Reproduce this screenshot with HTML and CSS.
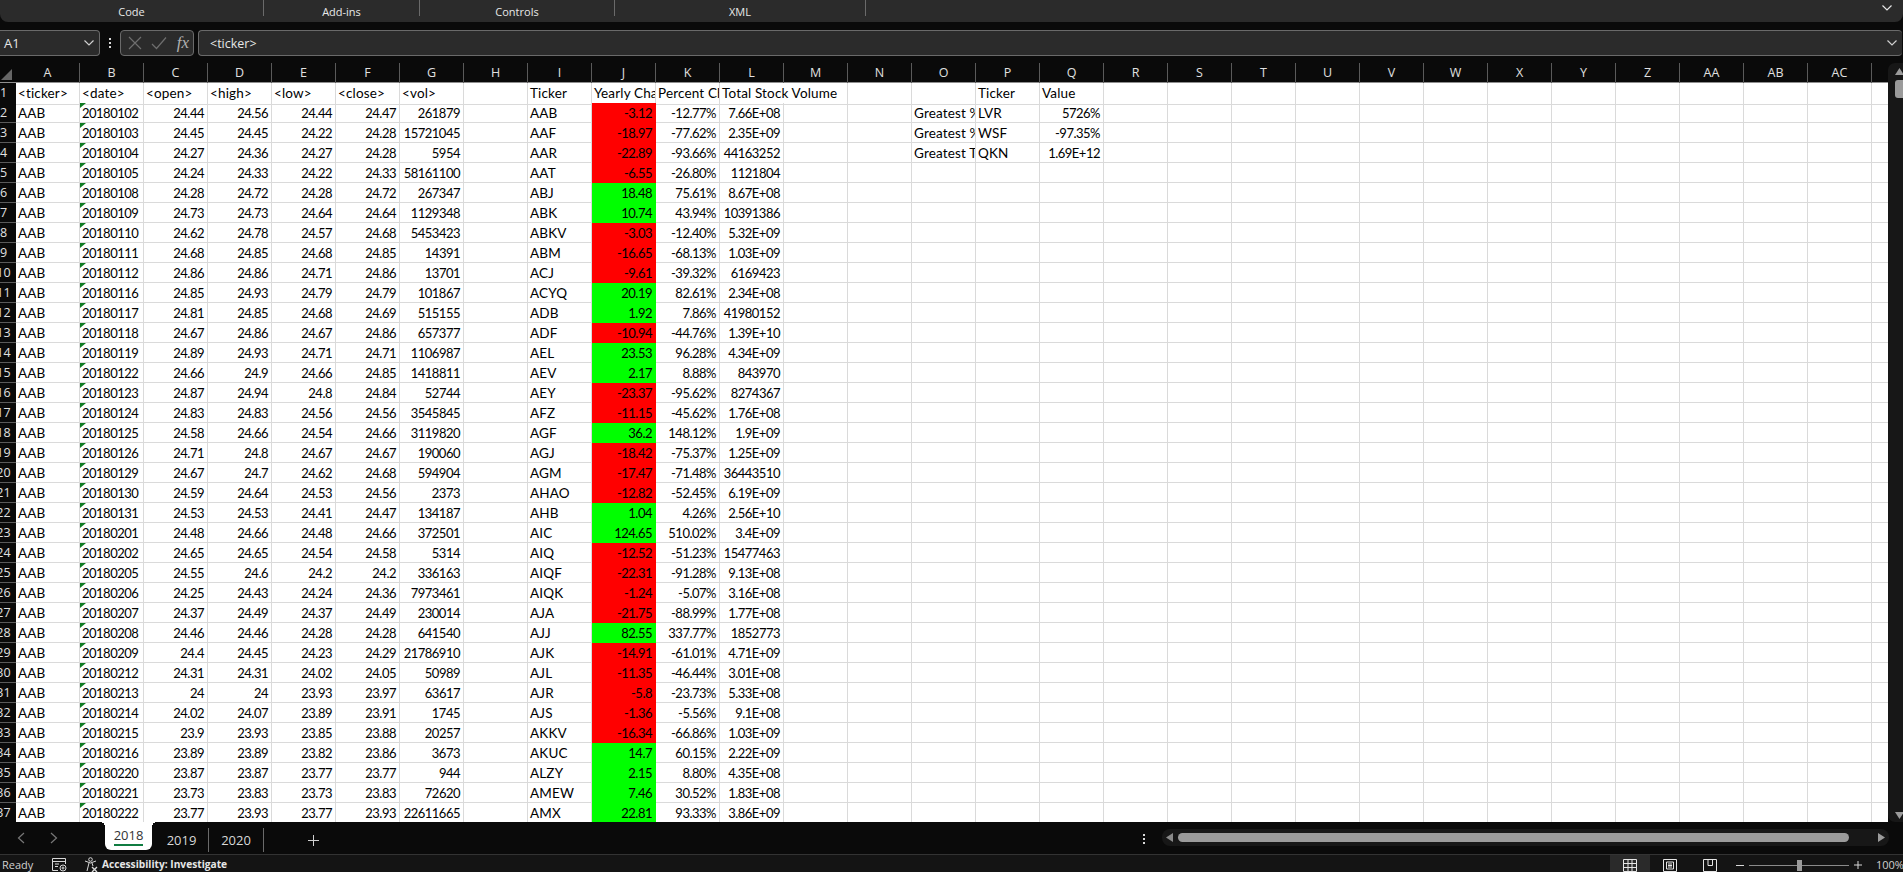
FILE: index.html
```html
<!DOCTYPE html>
<html lang="en">

<head>
    <meta charset="UTF-8">
    <title>Stock data - Excel</title>
    <link rel="stylesheet" href="styles.css">
</head>

<body>

    <!-- ribbon group labels -->
    <div class="ribbon">
        <div class="group g-code">Code</div>
        <div class="group g-addins">Add-ins</div>
        <div class="group g-controls">Controls</div>
        <div class="group g-xml">XML</div>
        <svg class="ribbon-chev" width="10" height="6" viewBox="0 0 10 6"><path d="M0.5 0.5 L5 5 L9.5 0.5" fill="none" stroke="#e6e6e6" stroke-width="1.2"/></svg>
    </div>

    <!-- name box and formula bar -->
    <div class="formula-row">
        <div class="name-box">
            <span>A1</span>
            <svg width="10" height="6" viewBox="0 0 10 6"><path d="M0.5 0.5 L5 5 L9.5 0.5" fill="none" stroke="#d0d0d0" stroke-width="1.2"/></svg>
        </div>
        <div class="dots"><b></b><b></b><b></b></div>
        <div class="fx-box">
            <svg width="14" height="14" viewBox="0 0 14 14"><path d="M1 1 L13 13 M13 1 L1 13" stroke="#6e6e6e" stroke-width="1.2" fill="none"/></svg>
            <svg width="16" height="14" viewBox="0 0 16 14"><path d="M1 8 L5.5 12.5 L15 1.5" stroke="#6e6e6e" stroke-width="1.2" fill="none"/></svg>
            <span class="fx">fx</span>
        </div>
        <div class="formula-input">
            <span>&lt;ticker&gt;</span>
            <svg width="10" height="6" viewBox="0 0 10 6"><path d="M0.5 0.5 L5 5 L9.5 0.5" fill="none" stroke="#d0d0d0" stroke-width="1.2"/></svg>
        </div>
    </div>

    <div class="grid-area">
        <div class="sheet">
            <div class="col-head">
                <div class="corner"><svg width="11" height="11" viewBox="0 0 11 11"><path d="M11 0 V11 H0 Z" fill="#666"/></svg></div>
                <div>A</div><div>B</div><div>C</div><div>D</div><div>E</div><div>F</div><div>G</div><div>H</div><div>I</div><div>J</div><div>K</div><div>L</div><div>M</div><div>N</div><div>O</div><div>P</div><div>Q</div><div>R</div><div>S</div><div>T</div><div>U</div><div>V</div><div>W</div><div>X</div><div>Y</div><div>Z</div><div>AA</div><div>AB</div><div>AC</div><div></div>
            </div>

            <div class="row"><div class="rh">1</div><div class="t">&lt;ticker&gt;</div><div class="t">&lt;date&gt;</div><div class="t">&lt;open&gt;</div><div class="t">&lt;high&gt;</div><div class="t">&lt;low&gt;</div><div class="t">&lt;close&gt;</div><div class="t">&lt;vol&gt;</div><div></div><div class="t">Ticker</div><div class="t">Yearly Change</div><div class="t">Percent Change</div><div class="t spill">Total Stock Volume</div><div></div><div></div><div></div><div class="t">Ticker</div><div class="t">Value</div><div class="rest2"></div></div>
            <div class="row"><div class="rh">2</div><div class="t">AAB</div><div class="d">20180102</div><div>24.44</div><div>24.56</div><div>24.44</div><div>24.47</div><div>261879</div><div></div><div class="t">AAB</div><div class="r">-3.12</div><div>-12.77%</div><div>7.66E+08</div><div></div><div></div><div class="t">Greatest % Increase</div><div class="t">LVR</div><div>5726%</div><div class="rest2"></div></div>
            <div class="row"><div class="rh">3</div><div class="t">AAB</div><div class="d">20180103</div><div>24.45</div><div>24.45</div><div>24.22</div><div>24.28</div><div>15721045</div><div></div><div class="t">AAF</div><div class="r">-18.97</div><div>-77.62%</div><div>2.35E+09</div><div></div><div></div><div class="t">Greatest % Decrease</div><div class="t">WSF</div><div>-97.35%</div><div class="rest2"></div></div>
            <div class="row"><div class="rh">4</div><div class="t">AAB</div><div class="d">20180104</div><div>24.27</div><div>24.36</div><div>24.27</div><div>24.28</div><div>5954</div><div></div><div class="t">AAR</div><div class="r">-22.89</div><div>-93.66%</div><div>44163252</div><div></div><div></div><div class="t">Greatest Total Volume</div><div class="t">QKN</div><div>1.69E+12</div><div class="rest2"></div></div>
            <div class="row"><div class="rh">5</div><div class="t">AAB</div><div class="d">20180105</div><div>24.24</div><div>24.33</div><div>24.22</div><div>24.33</div><div>58161100</div><div></div><div class="t">AAT</div><div class="r">-6.55</div><div>-26.80%</div><div>1121804</div><div class="rest"></div></div>
            <div class="row"><div class="rh">6</div><div class="t">AAB</div><div class="d">20180108</div><div>24.28</div><div>24.72</div><div>24.28</div><div>24.72</div><div>267347</div><div></div><div class="t">ABJ</div><div class="g">18.48</div><div>75.61%</div><div>8.67E+08</div><div class="rest"></div></div>
            <div class="row"><div class="rh">7</div><div class="t">AAB</div><div class="d">20180109</div><div>24.73</div><div>24.73</div><div>24.64</div><div>24.64</div><div>1129348</div><div></div><div class="t">ABK</div><div class="g">10.74</div><div>43.94%</div><div>10391386</div><div class="rest"></div></div>
            <div class="row"><div class="rh">8</div><div class="t">AAB</div><div class="d">20180110</div><div>24.62</div><div>24.78</div><div>24.57</div><div>24.68</div><div>5453423</div><div></div><div class="t">ABKV</div><div class="r">-3.03</div><div>-12.40%</div><div>5.32E+09</div><div class="rest"></div></div>
            <div class="row"><div class="rh">9</div><div class="t">AAB</div><div class="d">20180111</div><div>24.68</div><div>24.85</div><div>24.68</div><div>24.85</div><div>14391</div><div></div><div class="t">ABM</div><div class="r">-16.65</div><div>-68.13%</div><div>1.03E+09</div><div class="rest"></div></div>
            <div class="row"><div class="rh">10</div><div class="t">AAB</div><div class="d">20180112</div><div>24.86</div><div>24.86</div><div>24.71</div><div>24.86</div><div>13701</div><div></div><div class="t">ACJ</div><div class="r">-9.61</div><div>-39.32%</div><div>6169423</div><div class="rest"></div></div>
            <div class="row"><div class="rh">11</div><div class="t">AAB</div><div class="d">20180116</div><div>24.85</div><div>24.93</div><div>24.79</div><div>24.79</div><div>101867</div><div></div><div class="t">ACYQ</div><div class="g">20.19</div><div>82.61%</div><div>2.34E+08</div><div class="rest"></div></div>
            <div class="row"><div class="rh">12</div><div class="t">AAB</div><div class="d">20180117</div><div>24.81</div><div>24.85</div><div>24.68</div><div>24.69</div><div>515155</div><div></div><div class="t">ADB</div><div class="g">1.92</div><div>7.86%</div><div>41980152</div><div class="rest"></div></div>
            <div class="row"><div class="rh">13</div><div class="t">AAB</div><div class="d">20180118</div><div>24.67</div><div>24.86</div><div>24.67</div><div>24.86</div><div>657377</div><div></div><div class="t">ADF</div><div class="r">-10.94</div><div>-44.76%</div><div>1.39E+10</div><div class="rest"></div></div>
            <div class="row"><div class="rh">14</div><div class="t">AAB</div><div class="d">20180119</div><div>24.89</div><div>24.93</div><div>24.71</div><div>24.71</div><div>1106987</div><div></div><div class="t">AEL</div><div class="g">23.53</div><div>96.28%</div><div>4.34E+09</div><div class="rest"></div></div>
            <div class="row"><div class="rh">15</div><div class="t">AAB</div><div class="d">20180122</div><div>24.66</div><div>24.9</div><div>24.66</div><div>24.85</div><div>1418811</div><div></div><div class="t">AEV</div><div class="g">2.17</div><div>8.88%</div><div>843970</div><div class="rest"></div></div>
            <div class="row"><div class="rh">16</div><div class="t">AAB</div><div class="d">20180123</div><div>24.87</div><div>24.94</div><div>24.8</div><div>24.84</div><div>52744</div><div></div><div class="t">AEY</div><div class="r">-23.37</div><div>-95.62%</div><div>8274367</div><div class="rest"></div></div>
            <div class="row"><div class="rh">17</div><div class="t">AAB</div><div class="d">20180124</div><div>24.83</div><div>24.83</div><div>24.56</div><div>24.56</div><div>3545845</div><div></div><div class="t">AFZ</div><div class="r">-11.15</div><div>-45.62%</div><div>1.76E+08</div><div class="rest"></div></div>
            <div class="row"><div class="rh">18</div><div class="t">AAB</div><div class="d">20180125</div><div>24.58</div><div>24.66</div><div>24.54</div><div>24.66</div><div>3119820</div><div></div><div class="t">AGF</div><div class="g">36.2</div><div>148.12%</div><div>1.9E+09</div><div class="rest"></div></div>
            <div class="row"><div class="rh">19</div><div class="t">AAB</div><div class="d">20180126</div><div>24.71</div><div>24.8</div><div>24.67</div><div>24.67</div><div>190060</div><div></div><div class="t">AGJ</div><div class="r">-18.42</div><div>-75.37%</div><div>1.25E+09</div><div class="rest"></div></div>
            <div class="row"><div class="rh">20</div><div class="t">AAB</div><div class="d">20180129</div><div>24.67</div><div>24.7</div><div>24.62</div><div>24.68</div><div>594904</div><div></div><div class="t">AGM</div><div class="r">-17.47</div><div>-71.48%</div><div>36443510</div><div class="rest"></div></div>
            <div class="row"><div class="rh">21</div><div class="t">AAB</div><div class="d">20180130</div><div>24.59</div><div>24.64</div><div>24.53</div><div>24.56</div><div>2373</div><div></div><div class="t">AHAO</div><div class="r">-12.82</div><div>-52.45%</div><div>6.19E+09</div><div class="rest"></div></div>
            <div class="row"><div class="rh">22</div><div class="t">AAB</div><div class="d">20180131</div><div>24.53</div><div>24.53</div><div>24.41</div><div>24.47</div><div>134187</div><div></div><div class="t">AHB</div><div class="g">1.04</div><div>4.26%</div><div>2.56E+10</div><div class="rest"></div></div>
            <div class="row"><div class="rh">23</div><div class="t">AAB</div><div class="d">20180201</div><div>24.48</div><div>24.66</div><div>24.48</div><div>24.66</div><div>372501</div><div></div><div class="t">AIC</div><div class="g">124.65</div><div>510.02%</div><div>3.4E+09</div><div class="rest"></div></div>
            <div class="row"><div class="rh">24</div><div class="t">AAB</div><div class="d">20180202</div><div>24.65</div><div>24.65</div><div>24.54</div><div>24.58</div><div>5314</div><div></div><div class="t">AIQ</div><div class="r">-12.52</div><div>-51.23%</div><div>15477463</div><div class="rest"></div></div>
            <div class="row"><div class="rh">25</div><div class="t">AAB</div><div class="d">20180205</div><div>24.55</div><div>24.6</div><div>24.2</div><div>24.2</div><div>336163</div><div></div><div class="t">AIQF</div><div class="r">-22.31</div><div>-91.28%</div><div>9.13E+08</div><div class="rest"></div></div>
            <div class="row"><div class="rh">26</div><div class="t">AAB</div><div class="d">20180206</div><div>24.25</div><div>24.43</div><div>24.24</div><div>24.36</div><div>7973461</div><div></div><div class="t">AIQK</div><div class="r">-1.24</div><div>-5.07%</div><div>3.16E+08</div><div class="rest"></div></div>
            <div class="row"><div class="rh">27</div><div class="t">AAB</div><div class="d">20180207</div><div>24.37</div><div>24.49</div><div>24.37</div><div>24.49</div><div>230014</div><div></div><div class="t">AJA</div><div class="r">-21.75</div><div>-88.99%</div><div>1.77E+08</div><div class="rest"></div></div>
            <div class="row"><div class="rh">28</div><div class="t">AAB</div><div class="d">20180208</div><div>24.46</div><div>24.46</div><div>24.28</div><div>24.28</div><div>641540</div><div></div><div class="t">AJJ</div><div class="g">82.55</div><div>337.77%</div><div>1852773</div><div class="rest"></div></div>
            <div class="row"><div class="rh">29</div><div class="t">AAB</div><div class="d">20180209</div><div>24.4</div><div>24.45</div><div>24.23</div><div>24.29</div><div>21786910</div><div></div><div class="t">AJK</div><div class="r">-14.91</div><div>-61.01%</div><div>4.71E+09</div><div class="rest"></div></div>
            <div class="row"><div class="rh">30</div><div class="t">AAB</div><div class="d">20180212</div><div>24.31</div><div>24.31</div><div>24.02</div><div>24.05</div><div>50989</div><div></div><div class="t">AJL</div><div class="r">-11.35</div><div>-46.44%</div><div>3.01E+08</div><div class="rest"></div></div>
            <div class="row"><div class="rh">31</div><div class="t">AAB</div><div class="d">20180213</div><div>24</div><div>24</div><div>23.93</div><div>23.97</div><div>63617</div><div></div><div class="t">AJR</div><div class="r">-5.8</div><div>-23.73%</div><div>5.33E+08</div><div class="rest"></div></div>
            <div class="row"><div class="rh">32</div><div class="t">AAB</div><div class="d">20180214</div><div>24.02</div><div>24.07</div><div>23.89</div><div>23.91</div><div>1745</div><div></div><div class="t">AJS</div><div class="r">-1.36</div><div>-5.56%</div><div>9.1E+08</div><div class="rest"></div></div>
            <div class="row"><div class="rh">33</div><div class="t">AAB</div><div class="d">20180215</div><div>23.9</div><div>23.93</div><div>23.85</div><div>23.88</div><div>20257</div><div></div><div class="t">AKKV</div><div class="r">-16.34</div><div>-66.86%</div><div>1.03E+09</div><div class="rest"></div></div>
            <div class="row"><div class="rh">34</div><div class="t">AAB</div><div class="d">20180216</div><div>23.89</div><div>23.89</div><div>23.82</div><div>23.86</div><div>3673</div><div></div><div class="t">AKUC</div><div class="g">14.7</div><div>60.15%</div><div>2.22E+09</div><div class="rest"></div></div>
            <div class="row"><div class="rh">35</div><div class="t">AAB</div><div class="d">20180220</div><div>23.87</div><div>23.87</div><div>23.77</div><div>23.77</div><div>944</div><div></div><div class="t">ALZY</div><div class="g">2.15</div><div>8.80%</div><div>4.35E+08</div><div class="rest"></div></div>
            <div class="row"><div class="rh">36</div><div class="t">AAB</div><div class="d">20180221</div><div>23.73</div><div>23.83</div><div>23.73</div><div>23.83</div><div>72620</div><div></div><div class="t">AMEW</div><div class="g">7.46</div><div>30.52%</div><div>1.83E+08</div><div class="rest"></div></div>
            <div class="row"><div class="rh">37</div><div class="t">AAB</div><div class="d">20180222</div><div>23.77</div><div>23.93</div><div>23.77</div><div>23.93</div><div>22611665</div><div></div><div class="t">AMX</div><div class="g">22.81</div><div>93.33%</div><div>3.86E+09</div><div class="rest"></div></div>
        </div>

        <!-- vertical scrollbar -->
        <div class="vscroll">
            <svg width="9" height="7" viewBox="0 0 9 7"><path d="M4.5 0 L9 7 H0 Z" fill="#9b9b9b"/></svg>
            <div class="vthumb"></div>
            <svg class="vdown" width="9" height="7" viewBox="0 0 9 7"><path d="M0 0 H9 L4.5 7 Z" fill="#9b9b9b"/></svg>
        </div>
    </div>

    <!-- sheet tabs and horizontal scrollbar -->
    <div class="tabbar">
        <div class="tab-nav">
            <svg width="8" height="12" viewBox="0 0 8 12"><path d="M7 1 L1.5 6 L7 11" fill="none" stroke="#777" stroke-width="1.2"/></svg>
            <svg width="8" height="12" viewBox="0 0 8 12"><path d="M1 1 L6.5 6 L1 11" fill="none" stroke="#777" stroke-width="1.2"/></svg>
        </div>
        <div class="tab active">2018</div>
        <div class="tab">2019</div>
        <div class="tab">2020</div>
        <div class="tab-add">
            <svg width="11" height="11" viewBox="0 0 11 11"><path d="M5.5 0 V11 M0 5.5 H11" stroke="#d0d0d0" stroke-width="1"/></svg>
        </div>
        <div class="dots tab-dots"><b></b><b></b><b></b></div>
        <div class="hscroll">
            <svg width="7" height="9" viewBox="0 0 7 9"><path d="M7 0 V9 L0 4.5 Z" fill="#8a8a8a"/></svg>
            <div class="hthumb"></div>
            <svg width="7" height="9" viewBox="0 0 7 9"><path d="M0 0 V9 L7 4.5 Z" fill="#9b9b9b"/></svg>
        </div>
    </div>

    <!-- status bar -->
    <div class="status">
        <span class="ready">Ready</span>
        <svg class="macro" width="15" height="14" viewBox="0 0 15 14" fill="none" stroke="#d8d8d8"><path d="M0.5 12.5 V0.5 H13.5 V6 M0.5 3.5 H13.5 M3 6 H7 M3 8.5 H6 M0.5 12.5 H6"/><circle cx="11" cy="10" r="3"/><circle cx="11" cy="10" r="1"/></svg>
        <svg class="access" width="15" height="15" viewBox="0 0 15 15" fill="none" stroke="#d8d8d8"><circle cx="6.5" cy="2.5" r="1.8"/><path d="M1 4 L6.5 6 L12 4 M5 6 L3 14 M8 6 L9 9"/><path d="M8 10 L13 15 M13 10 L8 15" stroke-width="1.4"/></svg>
        <span class="access-text">Accessibility: Investigate</span>
        <div class="views">
            <div class="view on"><svg width="14" height="13" viewBox="0 0 14 13" fill="none" stroke="#e6e6e6"><path d="M0.5 0.5 H13.5 V12.5 H0.5 Z M0.5 4.5 H13.5 M0.5 8.5 H13.5 M5 0.5 V12.5 M9 0.5 V12.5"/></svg></div>
            <div class="view"><svg width="14" height="13" viewBox="0 0 14 13" fill="none" stroke="#e6e6e6"><path d="M0.5 0.5 H13.5 V12.5 H0.5 Z M3.5 3 H10.5 V10 H3.5 Z M5 5 H9 M5 6.5 H9 M5 8 H9"/></svg></div>
            <div class="view"><svg width="14" height="13" viewBox="0 0 14 13" fill="none" stroke="#e6e6e6"><path d="M0.5 0.5 H13.5 V12.5 H0.5 Z M5 0.5 V6.5 H9.5 V0.5"/></svg></div>
        </div>
        <div class="zoom-ctl">
            <span class="zoom-minus"></span>
            <div class="zoom-track"><span class="zoom-thumb"></span></div>
            <svg width="8" height="8" viewBox="0 0 8 8"><path d="M4 0 V8 M0 4 H8" stroke="#d8d8d8" stroke-width="1"/></svg>
        </div>
        <span class="zoom-val">100%</span>
    </div>

</body>

</html>
```

FILE: styles.css
```css
html, body {
    margin: 0;
    padding: 0;
}

body {
    width: 1903px;
    height: 872px;
    overflow: hidden;
    background-color: #0a0a0a;
    color: #e6e6e6;
    font-family: 'Open Sans', sans-serif;
    display: flex;
    flex-direction: column;
}

/* ribbon */
.ribbon {
    height: 22px;
    flex: none;
    box-sizing: border-box;
    background-color: #2b2b2b;
    border-radius: 0 0 8px 8px;
    display: flex;
    align-items: flex-start;
    position: relative;
}

.group {
    height: 16px;
    box-sizing: border-box;
    border-right: 1px solid #6a6a6a;
    text-align: center;
    font-size: 11px;
    line-height: 24px;
    color: #e8e8e8;
}

.g-code { width: 264px; }
.g-addins { width: 156px; }
.g-controls { width: 195px; }
.g-xml { width: 251px; }

.ribbon-chev {
    position: absolute;
    right: 11px;
    top: 5px;
}

/* name box + formula bar */
.formula-row {
    height: 26px;
    flex: none;
    margin-top: 8px;
    margin-bottom: 7px;
    display: flex;
    font-size: 12.5px;
}

.name-box,
.fx-box,
.formula-input {
    box-sizing: border-box;
    height: 26px;
    background-color: #2b2b2b;
    border: 1px solid #6a6a6a;
    border-radius: 4px;
    display: flex;
    align-items: center;
}

.name-box {
    width: 100px;
    padding: 0 5px 0 4px;
    justify-content: space-between;
    border-left: none;
    border-radius: 0 4px 4px 0;
    font-size: 13px;
}

.dots {
    width: 20px;
    display: flex;
    flex-direction: column;
    align-items: center;
    justify-content: center;
    gap: 2px;
}

.dots b {
    width: 2px;
    height: 2px;
    background-color: #d8d8d8;
}

.fx-box {
    width: 74px;
    padding: 0 4px 0 7px;
    justify-content: space-between;
}

.fx {
    font-family: 'Liberation Serif', serif;
    font-style: italic;
    font-size: 17px;
    color: #b0b0b0;
}

.formula-input {
    width: 1704px;
    margin-left: 4px;
    padding: 0 5px 0 11px;
    justify-content: space-between;
    border-right: none;
}

/* sheet */
.grid-area {
    height: 759px;
    flex: none;
    display: flex;
}

.sheet {
    width: 1888px;
    overflow: hidden;
}

.col-head,
.row {
    display: grid;
    grid-template-columns: 16px repeat(29, 64px) 16px;
}

.col-head {
    height: 20px;
    box-sizing: border-box;
    border-bottom: 1px solid #8f8f8f;
    background-color: #0a0a0a;
    font-family: 'Open Sans', sans-serif;
    font-size: 12.5px;
    line-height: 20px;
    color: #e0e0e0;
}

.col-head > div {
    text-align: center;
    border-right: 1px solid #5a5a5a;
}

.col-head > div:last-child {
    border-right: none;
}

.col-head .corner {
    border-right: none;
    display: flex;
    align-items: flex-end;
    justify-content: flex-end;
    padding: 0 4px 3px 0;
    box-sizing: border-box;
}

.row {
    height: 20px;
    background-color: #fff;
    color: #000;
    font-family: 'Lato', sans-serif;
    font-size: 13px;
    letter-spacing: -0.5px;
    line-height: 21px;
}

.row > div {
    box-sizing: border-box;
    position: relative;
    overflow: hidden;
    white-space: nowrap;
    border-right: 1px solid #dadada;
    border-bottom: 1px solid #dadada;
    padding: 0 3px 0 2px;
    text-align: right;
}

.row > .t,
.row > .d {
    text-align: left;
}

.row > .t {
    font-size: 13.5px;
    letter-spacing: 0.15px;
}

/* green corner on numbers stored as text */
.row > .d::before {
    content: "";
    position: absolute;
    left: 0;
    top: 0;
    border-top: 5px solid #0f7b22;
    border-right: 6px solid transparent;
}

.row > .r {
    background-color: #ff0000;
    border-color: #ff0000;
}

.row > .g {
    background-color: #00ff00;
    border-color: #00ff00;
}

.row > .spill {
    overflow: visible;
    border-right: none;
}

.row > .rest,
.row > .rest2 {
    border-right: none;
    background-image: repeating-linear-gradient(to right, transparent 0, transparent 63px, #dadada 63px, #dadada 64px);
}

.row > .rest { grid-column: 14 / -1; }
.row > .rest2 { grid-column: 19 / -1; }

.row > .rh {
    background-color: #0a0a0a;
    color: #e0e0e0;
    border-right: none;
    border-bottom: 1px solid #5a5a5a;
    padding: 0 9px 0 0;
    display: flex;
    justify-content: center;
    font-family: 'Open Sans', sans-serif;
    font-size: 12.5px;
    letter-spacing: 0;
    line-height: 20px;
}

/* scrollbars */
.vscroll {
    width: 15px;
    box-sizing: border-box;
    background-color: #171717;
    border-radius: 7px 0 0 7px;
    padding: 5px 0 3px 7px;
    display: flex;
    flex-direction: column;
}

.vthumb {
    width: 8px;
    height: 18px;
    margin-top: 5px;
    background-color: #9b9b9b;
    border-radius: 3px 0 0 3px;
}

.vdown {
    margin-top: auto;
}

.tabbar {
    height: 33px;
    flex: none;
    box-sizing: border-box;
    border-bottom: 1px solid #333;
    display: flex;
    font-size: 13px;
    color: #d8d8d8;
}

.tab-nav {
    width: 105px;
    box-sizing: border-box;
    padding: 10px 0 0 17px;
    display: flex;
    align-items: flex-start;
    gap: 25px;
}

.tab {
    width: 55px;
    height: 24px;
    margin-top: 6px;
    text-align: center;
    line-height: 22px;
    box-sizing: border-box;
    border-right: 1px solid #6a6a6a;
    padding-top: 1px;
}

.tab.active {
    width: 47px;
    height: 28px;
    margin: 0 3px 0 0;
    background-color: #fff;
    color: #333;
    border: none;
    border-radius: 0 0 6px 6px;
    line-height: 24px;
    position: relative;
}

.tab.active::after {
    content: "";
    position: absolute;
    left: 9px;
    right: 9px;
    bottom: 4px;
    height: 2px;
    background-color: #107c41;
}

/* little flare where the tab meets the sheet */
.tab.active::before {
    content: "";
    position: absolute;
    left: -5px;
    right: -5px;
    top: 0;
    height: 5px;
    background:
        radial-gradient(circle at 0 100%, transparent 5px, #fff 5px) left top / 5px 5px no-repeat,
        radial-gradient(circle at 100% 100%, transparent 5px, #fff 5px) right top / 5px 5px no-repeat;
}

.tab.active + .tab {
    width: 54px;
}

.tab-add {
    width: 55px;
    height: 24px;
    margin-top: 6px;
    display: flex;
    justify-content: flex-end;
    align-items: center;
}

.tab-dots {
    width: 8px;
    height: 20px;
    margin: 7px 0 0 821px;
}

.hscroll {
    width: 727px;
    height: 17px;
    margin: 7px 0 0 14px;
    box-sizing: border-box;
    background-color: #171717;
    border-radius: 8px;
    padding: 0 3px 0 4px;
    display: flex;
    align-items: center;
    gap: 5px;
}

.hthumb {
    width: 671px;
    height: 9px;
    margin-right: 24px;
    background-color: #9b9b9b;
    border-radius: 5px;
}

/* status bar */
.status {
    height: 17px;
    flex: none;
    background-color: #141414;
    display: flex;
    align-items: flex-end;
    font-size: 11.5px;
    line-height: 15px;
    color: #d0d0d0;
}

.ready {
    width: 52px;
    padding-left: 2px;
    box-sizing: border-box;
    font-size: 11px;
}

.macro {
    margin-right: 17px;
}

.access {
    margin-right: 3px;
}

.access-text {
    font-weight: 700;
    font-size: 10.2px;
    color: #e6e6e6;
}

.views {
    margin-left: auto;
    display: flex;
}

.view {
    width: 40px;
    height: 17px;
    box-sizing: border-box;
    padding-top: 3px;
    display: flex;
    align-items: center;
    justify-content: center;
}

.view.on {
    background-color: #2a2a2a;
}

.zoom-ctl {
    height: 17px;
    box-sizing: border-box;
    padding-top: 3px;
    display: flex;
    align-items: center;
    margin-left: 6px;
}

.zoom-minus {
    width: 8px;
    height: 1px;
    background-color: #d8d8d8;
    margin-right: 5px;
}

.zoom-track {
    width: 100px;
    height: 1px;
    background-color: #8a8a8a;
    margin-right: 5px;
    position: relative;
}

.zoom-thumb {
    position: absolute;
    left: 48px;
    top: -5px;
    width: 5px;
    height: 11px;
    background-color: #9b9b9b;
}

.zoom-val {
    margin-left: 14px;
    width: 27px;
    font-size: 11px;
    white-space: nowrap;
}
```
